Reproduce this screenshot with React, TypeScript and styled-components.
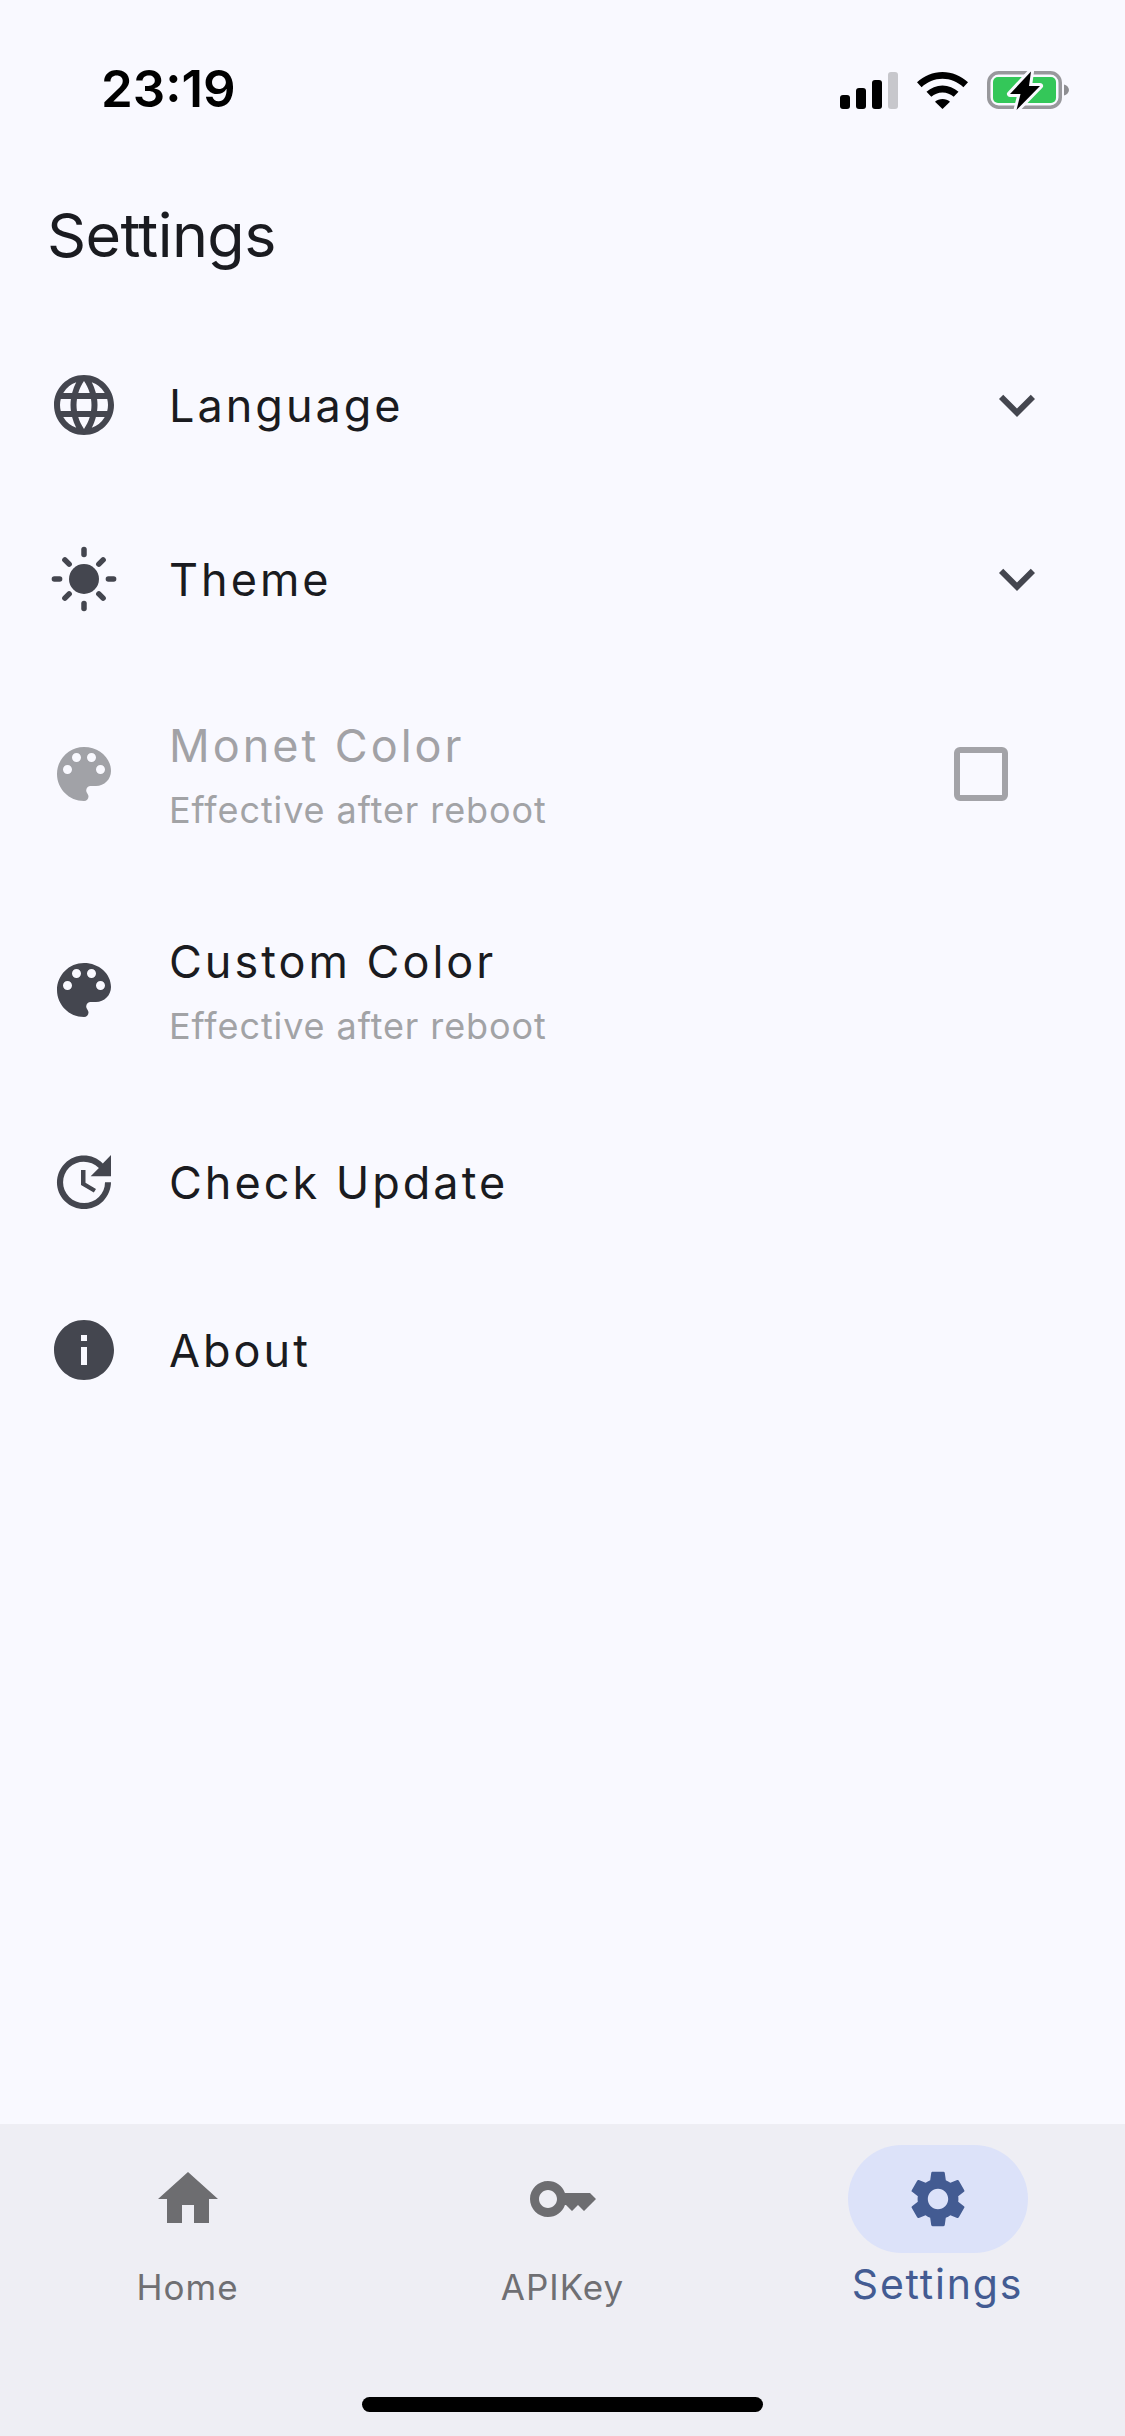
import React from "react";
import styled, { createGlobalStyle } from "styled-components";
import {
  MdLanguage,
  MdKeyboardArrowDown,
  MdUpdate,
  MdInfo,
  MdHome,
  MdKey,
  MdSettings
} from "react-icons/md";

const GlobalStyle = createGlobalStyle`
  html, body {
    margin: 0;
    padding: 0;
    background: #f9f9ff;
  }
  * {
    box-sizing: border-box;
  }
`;

const Page = styled.div`
  width: 1125px;
  height: 2436px;
  display: flex;
  flex-direction: column;
  background: #f9f9ff;
  font-family: Inter, "Liberation Sans", sans-serif;
  overflow: hidden;
`;

const StatusBar = styled.div`
  height: 132px;
  padding: 66px 56px 0 101px;
  display: flex;
  justify-content: space-between;
  align-items: flex-start;
`;
const Time = styled.div`
  font-size: 51px;
  line-height: 45px;
  font-weight: 600;
  color: #000;
`;
const StatusIcons = styled.div`
  display: flex;
  align-items: center;
  gap: 19px;
  margin-top: 3px;
`;

const Title = styled.h1`
  margin: 0;
  height: 186px;
  padding: 68px 0 0 47px;
  font-size: 61px;
  line-height: 70px;
  letter-spacing: -0.6px;
  font-weight: 400;
  color: #1a1b20;
`;

const List = styled.div`
  flex: 1;
  display: flex;
  flex-direction: column;
`;
const Row = styled.div<{ $h: number }>`
  height: ${p => p.$h}px;
  padding: 0 72px 0 48px;
  display: flex;
  align-items: center;
  gap: 49px;
`;
const IconSlot = styled.div<{ $off?: boolean }>`
  width: 72px;
  height: 72px;
  flex: none;
  color: ${p => (p.$off ? "#a1a2a7" : "#44464f")};
  svg {
    display: block;
    width: 72px;
    height: 72px;
  }
`;
const RowText = styled.div`
  flex: 1;
  padding-top: 2px;
  display: flex;
  flex-direction: column;
  gap: 18px;
`;
const RowTitle = styled.div<{ $off?: boolean }>`
  font-size: 45px;
  line-height: 52px;
  letter-spacing: 3px;
  font-weight: 400;
  color: ${p => (p.$off ? "#a2a2a6" : "#1a1b20")};
`;
const RowSub = styled.div`
  font-size: 36px;
  line-height: 40px;
  letter-spacing: 0.9px;
  font-weight: 400;
  color: #a2a3a6;
`;
const Checkbox = styled.div`
  width: 54px;
  height: 54px;
  margin-right: 45px;
  border: 6px solid #a3a3a8;
  border-radius: 6px;
`;

const Nav = styled.nav`
  height: 312px;
  background: #eeeef4;
  display: grid;
  grid-template-columns: repeat(3, 375px);
  position: relative;
`;
const NavItem = styled.div`
  padding-top: 21px;
  display: flex;
  flex-direction: column;
  align-items: center;
`;
const NavPill = styled.div<{ $active?: boolean }>`
  width: 180px;
  height: 108px;
  border-radius: 54px;
  display: flex;
  align-items: center;
  justify-content: center;
  background: ${p => (p.$active ? "#dce2f9" : "transparent")};
  color: ${p => (p.$active ? "#435b92" : "#6d6d70")};
`;
const NavIcon = styled.svg`
  width: 72px;
  height: 72px;
`;
const GearIcon = styled.svg`
  width: 68px;
  height: 68px;
`;
const NavLabel = styled.div`
  margin-top: 12px;
  font-size: 35px;
  line-height: 44px;
  letter-spacing: 1px;
  font-weight: 400;
  color: #6f6f73;
`;
const NavLabelActive = styled.div`
  margin-top: 7px;
  font-size: 41px;
  line-height: 48px;
  letter-spacing: 1.8px;
  font-weight: 400;
  color: #435b92;
`;
const HomeBar = styled.div`
  position: absolute;
  left: 362px;
  bottom: 24px;
  width: 401px;
  height: 15px;
  border-radius: 8px;
  background: #000;
`;

function SignalIcon() {
  return (
    <svg width="58" height="37" viewBox="0 0 58 37">
      <rect x="0" y="23" width="10" height="14" rx="3" fill="#000" />
      <rect x="16" y="16" width="10" height="21" rx="3" fill="#000" />
      <rect x="32" y="8" width="10" height="29" rx="3" fill="#000" />
      <rect x="48" y="0" width="10" height="37" rx="3" fill="#c7c7cc" />
    </svg>
  );
}

function WifiIcon() {
  return (
    <svg width="51" height="37" viewBox="0 0 51 37">
      <path
        d="M25.5 0C35 0 44 3.8 51 10.3l-4.6 4.9C40.8 9.8 33.4 6.7 25.5 6.7S10.200 9.800 4.600 15.200L0 10.300C7 3.800 16 0 25.500 0z"
        fill="#000"
      />
      <path
        d="M25.500 13.500c6 0 11.600 2.300 16 6.300l-4.800 5c-3-2.700-7-4.300-11.200-4.300s-8.200 1.600-11.200 4.300l-4.800-5c4.400-4 10-6.300 16-6.300z"
        fill="#000"
      />
      <path d="M25.500 27c2.900 0 5.500 1 7.500 2.800L25.500 37 18 29.800c2-1.800 4.600-2.800 7.500-2.800z" fill="#000" />
    </svg>
  );
}

function BatteryIcon() {
  return (
    <svg width="82" height="42" viewBox="0 0 82 42">
      <rect x="1.750" y="3.750" width="71.500" height="34.500" rx="10" fill="none" stroke="#98989c" strokeWidth="3.500" />
      <rect x="6" y="8" width="63" height="26" rx="5" fill="#34c759" />
      <path d="M77 15.500c2.800.8 5 3 5 5.500s-2.200 4.700-5 5.500z" fill="#8e8e92" />
      <path
        d="M44 2.500L23 25h10.500L29.500 41 53 17H42z"
        fill="#000"
        stroke="#f9f9ff"
        strokeWidth="6"
        strokeLinejoin="round"
        paintOrder="stroke"
      />
    </svg>
  );
}

function SunIcon() {
  const rays = [0, 45, 90, 135, 180, 225, 270, 315];
  return (
    <svg viewBox="0 0 72 72">
      <circle cx="36" cy="36" r="15" fill="currentColor" />
      {rays.map(deg => (
        <line
          key={deg}
          x1="36"
          y1={deg % 90 === 0 ? 6.400 : 9}
          x2="36"
          y2={deg % 90 === 0 ? 11.600 : 15}
          stroke="currentColor"
          strokeWidth="5.500"
          strokeLinecap="round"
          transform={`rotate(${deg} 36 36)`}
        />
      ))}
    </svg>
  );
}

function PaletteIcon() {
  return (
    <svg viewBox="0 0 24 24" fill="currentColor">
      <path d="M12 3c-4.970 0-9 4.030-9 9s4.030 9 9 9c.830 0 1.500-.670 1.500-1.500 0-.390-.150-.740-.390-1.010-.230-.260-.380-.610-.380-.990 0-.830.670-1.500 1.500-1.500H16c2.760 0 5-2.240 5-5 0-4.420-4.030-8-9-8zm-5.500 9c-.830 0-1.500-.670-1.500-1.500S5.670 9 6.500 9 8 9.670 8 10.500 7.330 12 6.500 12zm3-4C8.670 8 8 7.330 8 6.500S8.670 5 9.500 5s1.500.670 1.500 1.500S10.330 8 9.500 8zm5 0c-.830 0-1.500-.670-1.500-1.500S13.670 5 14.500 5s1.500.670 1.500 1.500S15.330 8 14.500 8zm3 4c-.830 0-1.500-.670-1.500-1.500S16.670 9 17.500 9s1.500.670 1.500 1.500-.670 1.500-1.500 1.500z" />
    </svg>
  );
}

export default function App() {
  return (
    <Page>
      <GlobalStyle />
      <StatusBar>
        <Time>23:19</Time>
        <StatusIcons>
          <SignalIcon />
          <WifiIcon />
          <BatteryIcon />
        </StatusIcons>
      </StatusBar>
      <Title>Settings</Title>
      <List>
        <Row $h={174}>
          <IconSlot>
            <MdLanguage />
          </IconSlot>
          <RowText>
            <RowTitle>Language</RowTitle>
          </RowText>
          <IconSlot>
            <MdKeyboardArrowDown />
          </IconSlot>
        </Row>
        <Row $h={174}>
          <IconSlot>
            <SunIcon />
          </IconSlot>
          <RowText>
            <RowTitle>Theme</RowTitle>
          </RowText>
          <IconSlot>
            <MdKeyboardArrowDown />
          </IconSlot>
        </Row>
        <Row $h={216}>
          <IconSlot $off>
            <PaletteIcon />
          </IconSlot>
          <RowText>
            <RowTitle $off>Monet Color</RowTitle>
            <RowSub>Effective after reboot</RowSub>
          </RowText>
          <Checkbox />
        </Row>
        <Row $h={216}>
          <IconSlot>
            <PaletteIcon />
          </IconSlot>
          <RowText>
            <RowTitle>Custom Color</RowTitle>
            <RowSub>Effective after reboot</RowSub>
          </RowText>
        </Row>
        <Row $h={168}>
          <IconSlot>
            <MdUpdate />
          </IconSlot>
          <RowText>
            <RowTitle>Check Update</RowTitle>
          </RowText>
        </Row>
        <Row $h={168}>
          <IconSlot>
            <MdInfo />
          </IconSlot>
          <RowText>
            <RowTitle>About</RowTitle>
          </RowText>
        </Row>
      </List>
      <Nav>
        <NavItem>
          <NavPill>
            <NavIcon as={MdHome} />
          </NavPill>
          <NavLabel>Home</NavLabel>
        </NavItem>
        <NavItem>
          <NavPill>
            <NavIcon as={MdKey} />
          </NavPill>
          <NavLabel>APIKey</NavLabel>
        </NavItem>
        <NavItem>
          <NavPill $active>
            <GearIcon as={MdSettings} />
          </NavPill>
          <NavLabelActive>Settings</NavLabelActive>
        </NavItem>
        <HomeBar />
      </Nav>
    </Page>
  );
}
